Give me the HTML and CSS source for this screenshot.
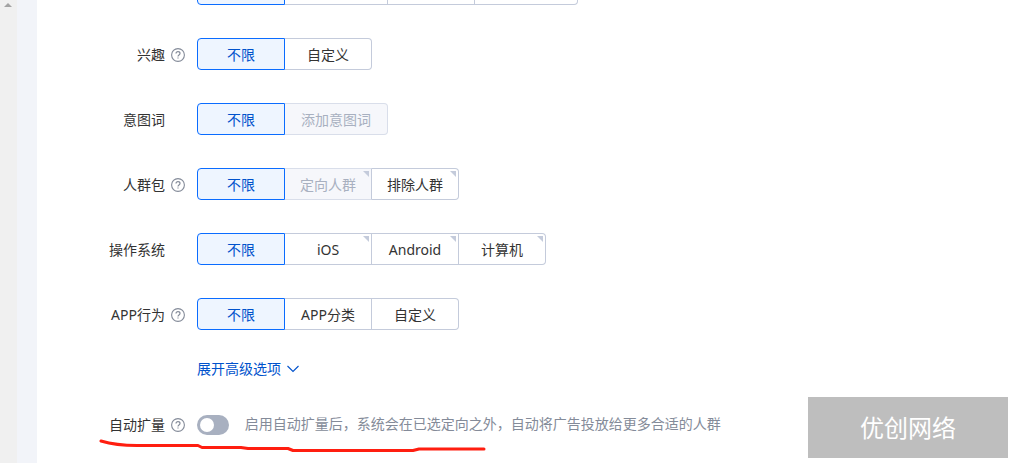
FILE: index.html
```html
<!DOCTYPE html>
<html lang="zh-CN">
<head>
  <meta charset="UTF-8" />
  <meta name="viewport" content="width=device-width, initial-scale=1.0" />
  <title>定向设置</title>
  <link rel="stylesheet" href="styles.css">
</head>
<body>
  <svg class="defs" aria-hidden="true">
    <symbol id="help" viewBox="0 0 14 14">
      <circle cx="7" cy="7" r="6.4" fill="none" stroke="currentColor" stroke-width="1.1" />
      <path d="M5 5.600C5 4.300 5.900 3.600 7 3.600s2 .7 2 1.800c0 1.500-2 1.600-2 3" fill="none" stroke="currentColor" stroke-width="1.2" />
      <path d="M6.400 9.400h1.200v1.200H6.400z" fill="currentColor" />
    </symbol>
  </svg>

  <div class="page">
    <div class="scrollbar">
      <svg width="8" height="4" viewBox="0 0 8 4"><path d="M0 4L4 0l4 4z" fill="#a3a3a3" /></svg>
    </div>

    <main class="form">
      <div class="row">
        <div class="label"></div>
        <div class="group">
          <button class="active" aria-label="选项一"></button>
          <button class="wide" aria-label="选项二"></button>
          <button aria-label="选项三"></button>
          <button class="wide" aria-label="选项四"></button>
        </div>
      </div>

      <div class="row">
        <div class="label">兴趣</div>
        <svg class="help"><use href="#help" /></svg>
        <div class="group">
          <button class="active">不限</button>
          <button>自定义</button>
        </div>
      </div>

      <div class="row">
        <div class="label">意图词</div>
        <div class="group">
          <button class="active">不限</button>
          <button class="wide" disabled>添加意图词</button>
        </div>
      </div>

      <div class="row">
        <div class="label">人群包</div>
        <svg class="help"><use href="#help" /></svg>
        <div class="group">
          <button class="active">不限</button>
          <button class="corner" disabled>定向人群</button>
          <button class="corner">排除人群</button>
        </div>
      </div>

      <div class="row">
        <div class="label">操作系统</div>
        <div class="group">
          <button class="active">不限</button>
          <button class="corner">iOS</button>
          <button class="corner">Android</button>
          <button class="corner">计算机</button>
        </div>
      </div>

      <div class="row">
        <div class="label">APP行为</div>
        <svg class="help"><use href="#help" /></svg>
        <div class="group">
          <button class="active">不限</button>
          <button>APP分类</button>
          <button>自定义</button>
        </div>
      </div>

      <div class="row more">
        <a href="#">展开高级选项
          <svg width="12" height="8" viewBox="0 0 12 8"><path d="M.5 1L6 6.500 11.500 1" fill="none" stroke="currentColor" stroke-width="1.1" /></svg>
        </a>
      </div>

      <div class="row">
        <label class="label" for="expand">自动扩量</label>
        <svg class="help"><use href="#help" /></svg>
        <div class="auto">
          <input class="switch" id="expand" type="checkbox" role="switch" />
          <span class="hint">启用自动扩量后，系统会在已选定向之外，自动将广告投放给更多合适的人群</span>
        </div>
        <svg class="underline" width="388" height="14" viewBox="0 0 388 14">
          <path d="M2 3C12 6 24 7.500 38 7.500H99L103 9.500H142L149 10.500H189L194 12.500H314L320 11H385" />
        </svg>
      </div>
    </main>
  </div>

  <div class="watermark">优创网络</div>
</body>
</html>
```

FILE: styles.css
```css
* {
  box-sizing: border-box;
}

body {
  margin: 0;
  height: 100vh;
  overflow: hidden;
  position: relative;
  background: #fff;
  font-family: "Noto Sans", "Noto Sans CJK SC", sans-serif;
  font-size: 14px;
  color: #333;
}

.defs {
  position: absolute;
  width: 0;
  height: 0;
}

.page {
  display: flex;
  height: 100%;
}

.scrollbar {
  width: 17px;
  padding: 2px 4px;
  background: #f0f0f0;
  line-height: 0;
}

.form {
  flex: 1;
  border-left: 20px solid #f2f4f9;
  /* scrolled a little, the first row is cut by the window */
  margin-top: -27px;
}

.row {
  position: relative;
  display: grid;
  grid-template-columns: 128px 20px 1fr;
  column-gap: 6px;
  align-items: center;
  line-height: 32px;
}

.row + .row {
  margin-top: 33px;
}

.row + .more,
.more + .row {
  margin-top: 29px;
}

.label {
  padding-top: 2px;
  line-height: 30px;
  text-align: right;
  white-space: nowrap;
}

.help {
  width: 14px;
  height: 14px;
  margin-top: 2px;
  color: #848b99;
}

.group,
.auto,
.more a {
  grid-column: 3;
}

.group {
  display: flex;
}

button {
  position: relative;
  height: 32px;
  min-width: 87px;
  padding: 0 15px;
  border: 1px solid #c4cbdb;
  border-left: none;
  background: #fff;
  color: #333;
  font: inherit;
  cursor: pointer;
}

button:last-child {
  border-radius: 0 4px 4px 0;
}

button:disabled {
  background: #f6f7fb;
  border-color: #d9deea;
  color: #a8b0c0;
  cursor: default;
}

button.active {
  min-width: 88px;
  border: 1px solid #0a6cff;
  border-radius: 4px 0 0 4px;
  background: #eef5ff;
  color: #0052cc;
}

.wide {
  min-width: 103px;
}

.corner:disabled {
  border-right-color: #c4cbdb;
}

.corner::after {
  content: "";
  position: absolute;
  top: 2px;
  right: 2px;
  border-top: 6px solid #c4cbdb;
  border-left: 6px solid transparent;
}

.more {
  line-height: 20px;
}

.more a {
  display: flex;
  align-items: center;
  gap: 6px;
  color: #0052cc;
  text-decoration: none;
}

.switch {
  appearance: none;
  width: 32px;
  height: 20px;
  margin: 0 12px 0 0;
  padding: 3px;
  border-radius: 10px;
  background: #a8b0c0;
  vertical-align: middle;
  cursor: pointer;
}

.switch::before {
  content: "";
  display: block;
  width: 14px;
  height: 14px;
  border-radius: 50%;
  background: #fff;
}

.switch:checked {
  background: #0a6cff;
}

.switch:checked::before {
  margin-left: auto;
}

.hint {
  color: #848b99;
}

.underline {
  position: absolute;
  left: 62px;
  top: 30px;
  fill: none;
  stroke: #ff1e10;
  stroke-width: 3;
  stroke-linecap: round;
  stroke-linejoin: round;
}

.watermark {
  position: absolute;
  right: 5px;
  bottom: 5px;
  width: 200px;
  line-height: 61px;
  background: #bebebe;
  color: #fff;
  font-size: 24px;
  text-align: center;
}
```
